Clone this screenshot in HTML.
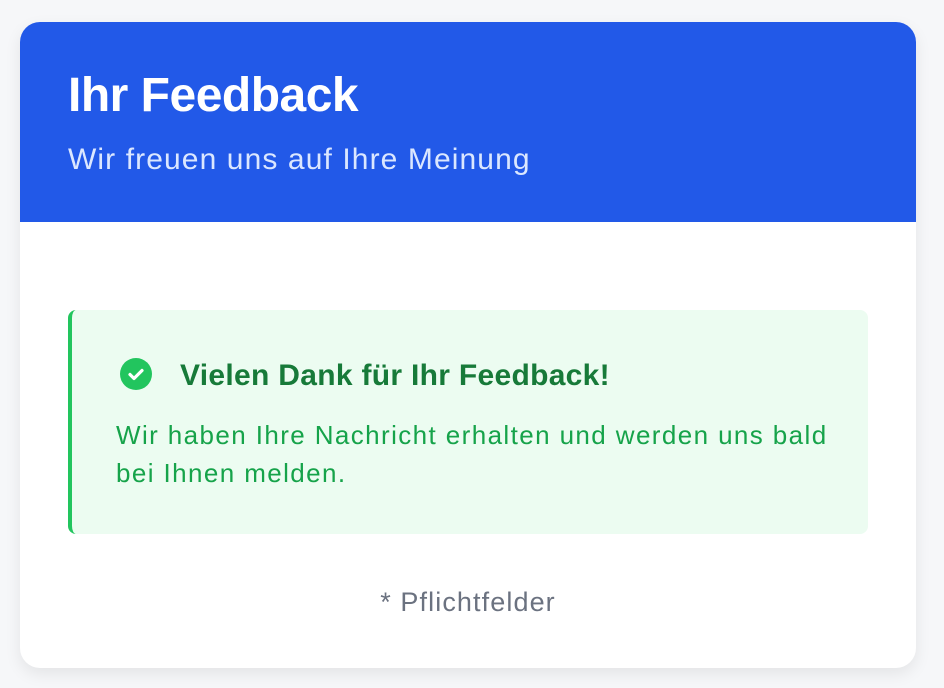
<!DOCTYPE html>
<html><head><meta charset="utf-8"><style>
html,body{margin:0;padding:0}
body{width:944px;height:688px;background:#f6f7f9;position:relative;overflow:hidden;font-family:"Liberation Sans",Arial,sans-serif}
.card{position:absolute;left:20px;top:22px;width:896px;height:646px;background:#fff;border-radius:20px;overflow:hidden;box-shadow:0 6px 16px rgba(0,0,0,0.08)}
.head{position:absolute;left:0;top:0;width:896px;height:200px;background:#2259e8}
.t{position:absolute;white-space:nowrap}
.box{position:absolute;left:48px;top:288px;width:800px;height:224px;background:#ecfcf1;border-left:4px solid #22c55e;border-radius:8px;box-sizing:border-box}
</style></head><body>
<div class="card">
 <div class="head">
  <div class="t" style="left:48px;top:47px;font-size:48px;font-weight:bold;color:#fff;letter-spacing:-0.5px;line-height:54px">Ihr Feedback</div>
  <div class="t" style="left:48px;top:119px;font-size:30px;color:#dbe7ff;letter-spacing:1.1px;line-height:38px">Wir freuen uns auf Ihre Meinung</div>
 </div>
 <div class="box">
  <svg style="position:absolute;left:48px;top:48px" width="32" height="32" viewBox="0 0 32 32"><circle cx="16" cy="16" r="16" fill="#22c55e"/><path d="M10 16.5l4 4 8-8" stroke="#fff" stroke-width="3.2" fill="none" stroke-linecap="round" stroke-linejoin="round"/></svg>
  <div class="t" style="left:108px;top:47px;font-size:30px;font-weight:bold;color:#177a39;letter-spacing:0.3px;line-height:38px">Vielen Dank für Ihr Feedback!</div>
  <div class="t" style="left:44px;top:106px;font-size:26px;color:#16a34a;letter-spacing:1.4px;line-height:38px">Wir haben Ihre Nachricht erhalten und werden uns bald<br>bei Ihnen melden.</div>
 </div>
 <div class="t" style="left:0;width:896px;text-align:center;top:563px;font-size:27px;color:#6b7280;letter-spacing:1.1px;line-height:34px">* Pflichtfelder</div>
</div>
</body></html>
